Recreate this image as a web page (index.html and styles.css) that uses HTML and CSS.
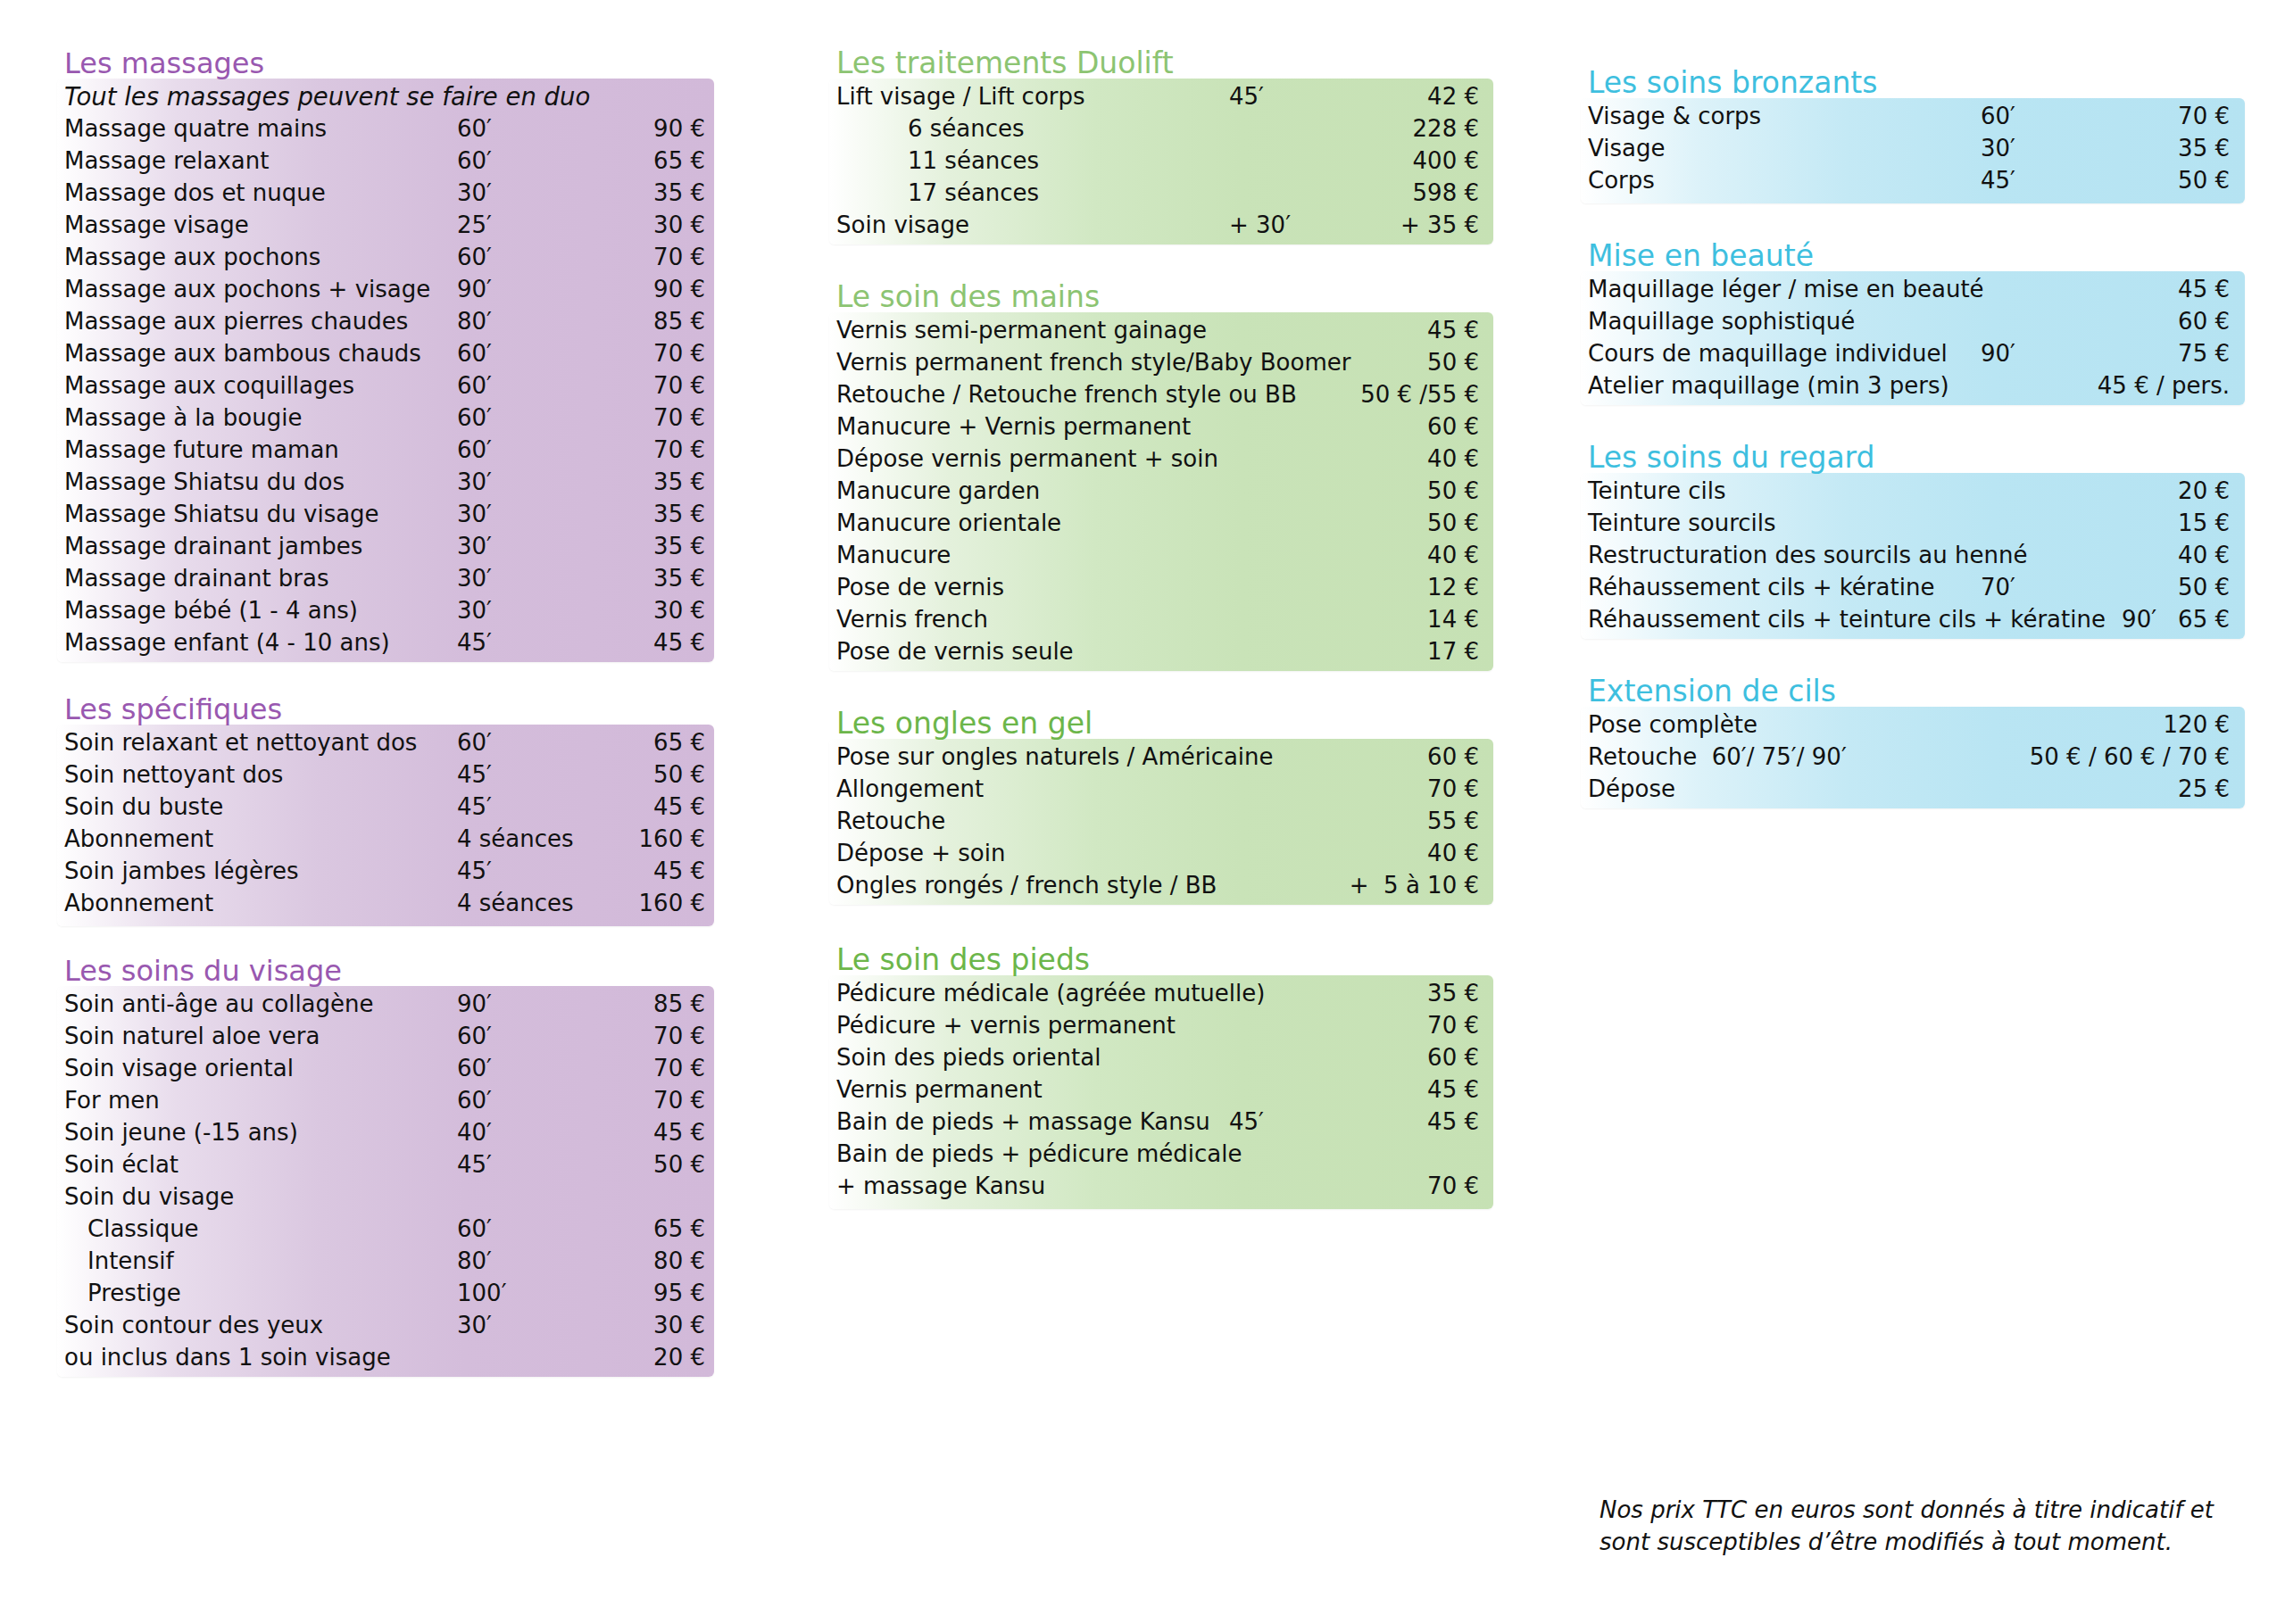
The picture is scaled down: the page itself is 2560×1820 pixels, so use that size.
FILE: index.html
```html
<!DOCTYPE html>
<html lang="fr">
<head>
<meta charset="utf-8">
<title>Tarifs</title>
<link rel="stylesheet" href="styles.css">
</head>
<body>
<div class="page">
  <div class="col col1">
    <section class="sec purple">
      <h2 class="title">Les massages</h2>
      <div class="box">
        <div class="row"><span class="n it">Tout les massages peuvent se faire en duo</span></div>
        <div class="row"><span class="n">Massage quatre mains</span><span class="d">60′</span><span class="p">90 €</span></div>
        <div class="row"><span class="n">Massage relaxant</span><span class="d">60′</span><span class="p">65 €</span></div>
        <div class="row"><span class="n">Massage dos et nuque</span><span class="d">30′</span><span class="p">35 €</span></div>
        <div class="row"><span class="n">Massage visage</span><span class="d">25′</span><span class="p">30 €</span></div>
        <div class="row"><span class="n">Massage aux pochons</span><span class="d">60′</span><span class="p">70 €</span></div>
        <div class="row"><span class="n">Massage aux pochons + visage</span><span class="d">90′</span><span class="p">90 €</span></div>
        <div class="row"><span class="n">Massage aux pierres chaudes</span><span class="d">80′</span><span class="p">85 €</span></div>
        <div class="row"><span class="n">Massage aux bambous chauds</span><span class="d">60′</span><span class="p">70 €</span></div>
        <div class="row"><span class="n">Massage aux coquillages</span><span class="d">60′</span><span class="p">70 €</span></div>
        <div class="row"><span class="n">Massage à la bougie</span><span class="d">60′</span><span class="p">70 €</span></div>
        <div class="row"><span class="n">Massage future maman</span><span class="d">60′</span><span class="p">70 €</span></div>
        <div class="row"><span class="n">Massage Shiatsu du dos</span><span class="d">30′</span><span class="p">35 €</span></div>
        <div class="row"><span class="n">Massage Shiatsu du visage</span><span class="d">30′</span><span class="p">35 €</span></div>
        <div class="row"><span class="n">Massage drainant jambes</span><span class="d">30′</span><span class="p">35 €</span></div>
        <div class="row"><span class="n">Massage drainant bras</span><span class="d">30′</span><span class="p">35 €</span></div>
        <div class="row"><span class="n">Massage bébé (1 - 4 ans)</span><span class="d">30′</span><span class="p">30 €</span></div>
        <div class="row"><span class="n">Massage enfant (4 - 10 ans)</span><span class="d">45′</span><span class="p">45 €</span></div>
      </div>
    </section>

    <section class="sec purple gap-a">
      <h2 class="title">Les spécifiques</h2>
      <div class="box pad-b">
        <div class="row"><span class="n">Soin relaxant et nettoyant dos</span><span class="d">60′</span><span class="p">65 €</span></div>
        <div class="row"><span class="n">Soin nettoyant dos</span><span class="d">45′</span><span class="p">50 €</span></div>
        <div class="row"><span class="n">Soin du buste</span><span class="d">45′</span><span class="p">45 €</span></div>
        <div class="row"><span class="n">Abonnement</span><span class="d">4 séances</span><span class="p">160 €</span></div>
        <div class="row"><span class="n">Soin jambes légères</span><span class="d">45′</span><span class="p">45 €</span></div>
        <div class="row"><span class="n">Abonnement</span><span class="d">4 séances</span><span class="p">160 €</span></div>
      </div>
    </section>

    <section class="sec purple gap-s">
      <h2 class="title">Les soins du visage</h2>
      <div class="box">
        <div class="row"><span class="n">Soin anti-âge au collagène</span><span class="d">90′</span><span class="p">85 €</span></div>
        <div class="row"><span class="n">Soin naturel aloe vera</span><span class="d">60′</span><span class="p">70 €</span></div>
        <div class="row"><span class="n">Soin visage oriental</span><span class="d">60′</span><span class="p">70 €</span></div>
        <div class="row"><span class="n">For men</span><span class="d">60′</span><span class="p">70 €</span></div>
        <div class="row"><span class="n">Soin jeune (-15 ans)</span><span class="d">40′</span><span class="p">45 €</span></div>
        <div class="row"><span class="n">Soin éclat</span><span class="d">45′</span><span class="p">50 €</span></div>
        <div class="row"><span class="n">Soin du visage</span></div>
        <div class="row"><span class="n ind-s">Classique</span><span class="d">60′</span><span class="p">65 €</span></div>
        <div class="row"><span class="n ind-s">Intensif</span><span class="d">80′</span><span class="p">80 €</span></div>
        <div class="row"><span class="n ind-s">Prestige</span><span class="d">100′</span><span class="p">95 €</span></div>
        <div class="row"><span class="n">Soin contour des yeux</span><span class="d">30′</span><span class="p">30 €</span></div>
        <div class="row"><span class="n">ou inclus dans 1 soin visage</span><span class="p">20 €</span></div>
      </div>
    </section>
  </div>

  <div class="col col2">
    <section class="sec green">
      <h2 class="title">Les traitements Duolift</h2>
      <div class="box">
        <div class="row"><span class="n">Lift visage / Lift corps</span><span class="d">45′</span><span class="p">42 €</span></div>
        <div class="row"><span class="n ind-l">6 séances</span><span class="p">228 €</span></div>
        <div class="row"><span class="n ind-l">11 séances</span><span class="p">400 €</span></div>
        <div class="row"><span class="n ind-l">17 séances</span><span class="p">598 €</span></div>
        <div class="row"><span class="n">Soin visage</span><span class="d">+ 30′</span><span class="p">+ 35 €</span></div>
      </div>
    </section>

    <section class="sec green gap-b">
      <h2 class="title">Le soin des mains</h2>
      <div class="box">
        <div class="row"><span class="n">Vernis semi-permanent gainage</span><span class="p">45 €</span></div>
        <div class="row"><span class="n">Vernis permanent french style/Baby Boomer</span><span class="p">50 €</span></div>
        <div class="row"><span class="n">Retouche / Retouche french style ou BB</span><span class="p">50 € /55 €</span></div>
        <div class="row"><span class="n">Manucure + Vernis permanent</span><span class="p">60 €</span></div>
        <div class="row"><span class="n">Dépose vernis permanent + soin</span><span class="p">40 €</span></div>
        <div class="row"><span class="n">Manucure garden</span><span class="p">50 €</span></div>
        <div class="row"><span class="n">Manucure orientale</span><span class="p">50 €</span></div>
        <div class="row"><span class="n">Manucure</span><span class="p">40 €</span></div>
        <div class="row"><span class="n">Pose de vernis</span><span class="p">12 €</span></div>
        <div class="row"><span class="n">Vernis french</span><span class="p">14 €</span></div>
        <div class="row"><span class="n">Pose de vernis seule</span><span class="p">17 €</span></div>
      </div>
    </section>

    <section class="sec green dark gap-b">
      <h2 class="title">Les ongles en gel</h2>
      <div class="box">
        <div class="row"><span class="n">Pose sur ongles naturels / Américaine</span><span class="p">60 €</span></div>
        <div class="row"><span class="n">Allongement</span><span class="p">70 €</span></div>
        <div class="row"><span class="n">Retouche</span><span class="p">55 €</span></div>
        <div class="row"><span class="n">Dépose + soin</span><span class="p">40 €</span></div>
        <div class="row"><span class="n">Ongles rongés / french style / BB</span><span class="p">+&nbsp; 5 à 10 €</span></div>
      </div>
    </section>

    <section class="sec green dark gap-c">
      <h2 class="title">Le soin des pieds</h2>
      <div class="box pad-b">
        <div class="row"><span class="n">Pédicure médicale (agréée mutuelle)</span><span class="p">35 €</span></div>
        <div class="row"><span class="n">Pédicure + vernis permanent</span><span class="p">70 €</span></div>
        <div class="row"><span class="n">Soin des pieds oriental</span><span class="p">60 €</span></div>
        <div class="row"><span class="n">Vernis permanent</span><span class="p">45 €</span></div>
        <div class="row"><span class="n">Bain de pieds + massage Kansu</span><span class="d">45′</span><span class="p">45 €</span></div>
        <div class="row"><span class="n">Bain de pieds + pédicure médicale</span></div>
        <div class="row"><span class="n">+ massage Kansu</span><span class="p">70 €</span></div>
      </div>
    </section>
  </div>

  <div class="col col3">
    <section class="sec blue">
      <h2 class="title">Les soins bronzants</h2>
      <div class="box pad-b">
        <div class="row"><span class="n">Visage &amp; corps</span><span class="d">60′</span><span class="p">70 €</span></div>
        <div class="row"><span class="n">Visage</span><span class="d">30′</span><span class="p">35 €</span></div>
        <div class="row"><span class="n">Corps</span><span class="d">45′</span><span class="p">50 €</span></div>
      </div>
    </section>

    <section class="sec blue gap-b">
      <h2 class="title">Mise en beauté</h2>
      <div class="box">
        <div class="row"><span class="n">Maquillage léger / mise en beauté</span><span class="p">45 €</span></div>
        <div class="row"><span class="n">Maquillage sophistiqué</span><span class="p">60 €</span></div>
        <div class="row"><span class="n">Cours de maquillage individuel</span><span class="d">90′</span><span class="p">75 €</span></div>
        <div class="row"><span class="n">Atelier maquillage (min 3 pers)</span><span class="p">45 € / pers.</span></div>
      </div>
    </section>

    <section class="sec blue gap-b">
      <h2 class="title">Les soins du regard</h2>
      <div class="box">
        <div class="row"><span class="n">Teinture cils</span><span class="p">20 €</span></div>
        <div class="row"><span class="n">Teinture sourcils</span><span class="p">15 €</span></div>
        <div class="row"><span class="n">Restructuration des sourcils au henné</span><span class="p">40 €</span></div>
        <div class="row"><span class="n">Réhaussement cils + kératine</span><span class="d">70′</span><span class="p">50 €</span></div>
        <div class="row"><span class="n">Réhaussement cils + teinture cils + kératine</span><span class="p"><span class="pd">90′</span>65 €</span></div>
      </div>
    </section>

    <section class="sec blue gap-b">
      <h2 class="title">Extension de cils</h2>
      <div class="box">
        <div class="row"><span class="n">Pose complète</span><span class="p">120 €</span></div>
        <div class="row"><span class="n">Retouche&nbsp; 60′/ 75′/ 90′</span><span class="p">50 € / 60 € / 70 €</span></div>
        <div class="row"><span class="n">Dépose</span><span class="p">25 €</span></div>
      </div>
    </section>

    <p class="note">Nos prix TTC en euros sont donnés à titre indicatif et<br>sont susceptibles d’être modifiés à tout moment.</p>
  </div>
</div>
</body>
</html>
```

FILE: styles.css
```css
html, body {
  margin: 0;
  padding: 0;
  background: #ffffff;
}

body {
  width: 2560px;
  height: 1820px;
  font-family: "DejaVu Sans", "Liberation Sans", sans-serif;
  color: #111111;
  overflow: hidden;
}

.page {
  display: flex;
  align-items: flex-start;
  padding: 54px 0 0 64px;
}

.col1 { width: 736px; }
.col2 { width: 744px; margin-left: 129px; }
.col3 { width: 744px; margin-left: 98px; padding-top: 22px; }

.sec { display: flex; flex-direction: column; }
.gap-a { margin-top: 36px; }
.gap-s { margin-top: 33px; }
.gap-b { margin-top: 42px; }
.gap-c { margin-top: 45px; }

.title {
  margin: 0;
  padding-left: 8px;
  font-size: 33px;
  font-weight: normal;
  line-height: 34px;
  height: 34px;
  white-space: nowrap;
  position: relative;
  z-index: 1;
}

.col1 .title { font-size: 32px; }

.purple .title { color: #9958b0; }
.green .title { color: #8cc472; }
.green.dark .title { color: #6cb64a; }
.blue .title { color: #3ebfdf; }

.box {
  padding: 2px 0 4px 8px;
  border-radius: 6px;
  box-shadow: 0 1px 2px rgba(0, 0, 0, 0.05);
}
.box.pad-b { padding-bottom: 8px; }

.purple .box {
  background: linear-gradient(90deg, #ffffff 0%, #e8dcec 18%, #dac7e0 40%, #d4bddb 62%, #d2b9d9 100%);
}
.green .box {
  background: linear-gradient(90deg, #ffffff 0%, #e4f1dc 18%, #d1e8c3 40%, #c9e3b8 62%, #c6e1b4 100%);
}
.blue .box {
  background: linear-gradient(90deg, #ffffff 0%, #dcf2f9 18%, #c4e9f5 40%, #b9e5f3 62%, #b5e3f2 100%);
}

.col1 .box { padding-right: 10px; }
.col2 .box { padding-right: 16px; }
.col3 .box { padding-right: 17px; }

.row {
  display: grid;
  grid-template-columns: 440px 1fr auto;
  height: 36px;
  font-size: 26px;
  line-height: 36px;
  white-space: nowrap;
}

.n { grid-column: 1 / 3; grid-row: 1; }
.d { grid-column: 2; grid-row: 1; }
.p { grid-column: 3; grid-row: 1; text-align: right; }

.it { font-style: italic; font-size: 27.5px; }
.ind-s { padding-left: 26px; }
.ind-l { padding-left: 80px; }
.pd { margin-right: 24px; }

.note {
  margin: 768px 0 0 0;
  padding-left: 21px;
  font-size: 26px;
  line-height: 36px;
  font-style: italic;
  white-space: nowrap;
}
```
